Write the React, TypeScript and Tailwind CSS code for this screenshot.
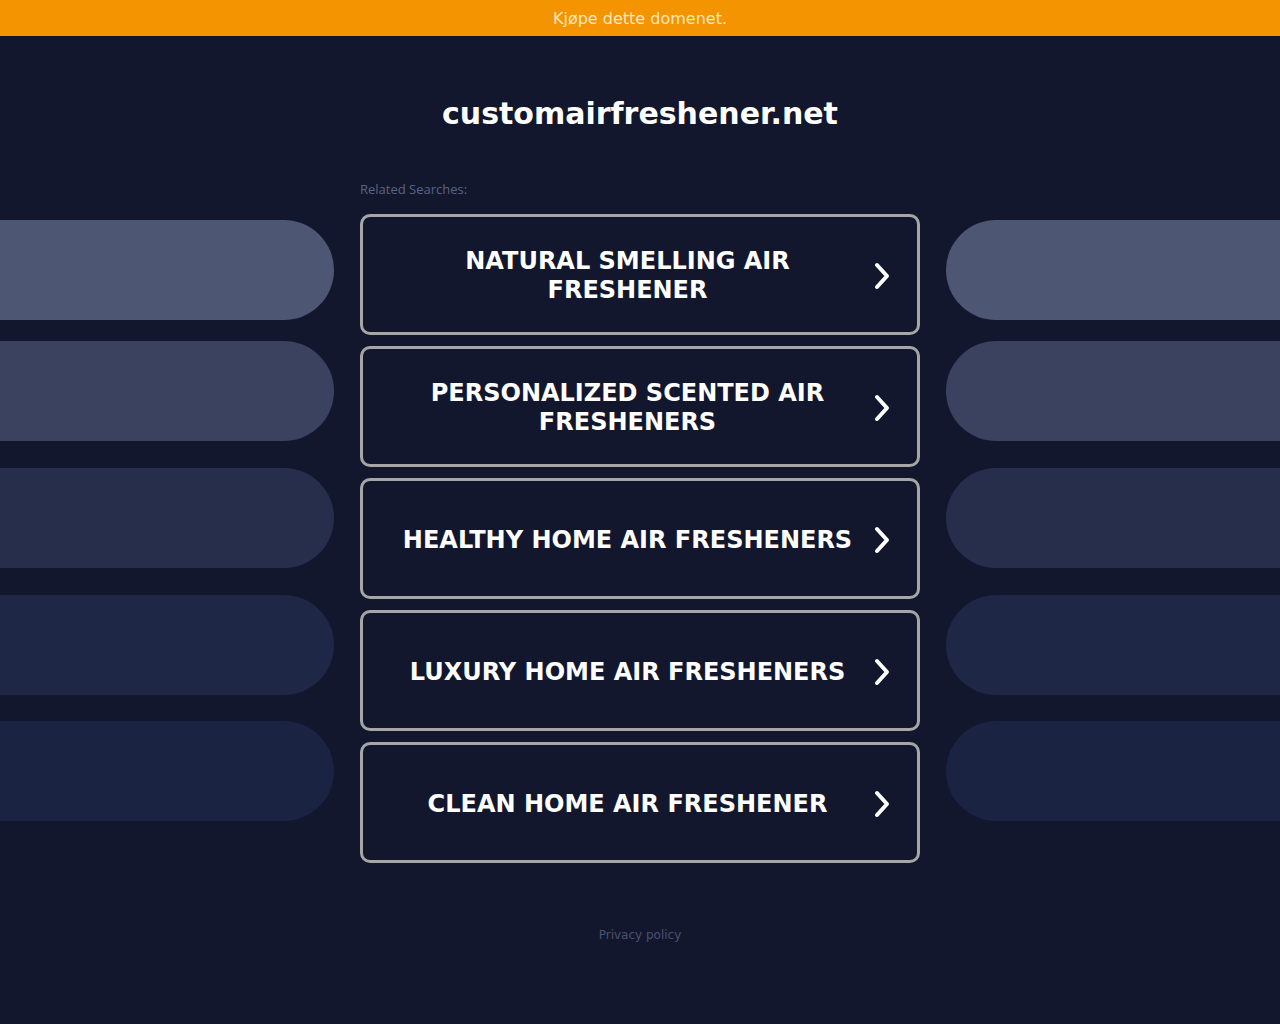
import React from "react";

const items = [
  "NATURAL SMELLING AIR FRESHENER",
  "PERSONALIZED SCENTED AIR FRESHENERS",
  "HEALTHY HOME AIR FRESHENERS",
  "LUXURY HOME AIR FRESHENERS",
  "CLEAN HOME AIR FRESHENER",
];

function Chevron() {
  return (
    <svg width="18" height="28" viewBox="0 0 18 28" className="shrink-0">
      <path d="M4 3 L14 14 L4 25" fill="none" stroke="white" strokeWidth="4" strokeLinecap="round" strokeLinejoin="round" />
    </svg>
  );
}

export default function App() {
  return (
    <div className="min-h-[1024px] w-full bg-[#12172e]" style={{ fontFamily: '"DejaVu Sans", sans-serif' }}>
      <div className="h-9 bg-[#f39400] flex items-center justify-center text-[16px] text-[#fde7c0] pt-[1px]">
        Kjøpe dette domenet.
      </div>
      <div className="flex justify-center pt-[56px]">
        <h1 className="text-[30px] font-bold text-white leading-[44px]">customairfreshener.net</h1>
      </div>
      <div className="grid grid-cols-[334px_560px_334px] gap-x-[26px] mt-[43px]">
        <div className="flex flex-col pt-[41px]">
          <div className="h-[100px] rounded-r-[50px] bg-[#4d5673]" />
          <div className="h-[100px] rounded-r-[50px] bg-[#3a4260] mt-[21px]" />
          <div className="h-[100px] rounded-r-[50px] bg-[#262e4c] mt-[27px]" />
          <div className="h-[100px] rounded-r-[50px] bg-[#1e2745] mt-[27px]" />
          <div className="h-[100px] rounded-r-[50px] bg-[#1b2342] mt-[26px]" />
        </div>
        <div className="flex flex-col">
          <div className="text-[13px] text-[#5a6382] h-[35px] leading-[20px]" style={{ fontFamily: '"Open Sans", sans-serif' }}>
            Related Searches:
          </div>
          <div className="flex flex-col gap-[11px]">
            {items.map((t) => (
              <div key={t} className="h-[121px] rounded-[10px] border-[3px] border-[#a6a6a6] flex items-center pl-[37px] pr-[26px] pt-[3px]">
                <div className="flex-1 text-center text-white font-bold text-[24px] leading-[29px] pr-[18px]">
                  {t}
                </div>
                <Chevron />
              </div>
            ))}
          </div>
        </div>
        <div className="flex flex-col pt-[41px]">
          <div className="h-[100px] rounded-l-[50px] bg-[#4d5673]" />
          <div className="h-[100px] rounded-l-[50px] bg-[#3a4260] mt-[21px]" />
          <div className="h-[100px] rounded-l-[50px] bg-[#262e4c] mt-[27px]" />
          <div className="h-[100px] rounded-l-[50px] bg-[#1e2745] mt-[27px]" />
          <div className="h-[100px] rounded-l-[50px] bg-[#1b2342] mt-[26px]" />
        </div>
      </div>
      <div className="flex justify-center mt-[63px] text-[12px] text-[#4a5270]">Privacy policy</div>
    </div>
  );
}
